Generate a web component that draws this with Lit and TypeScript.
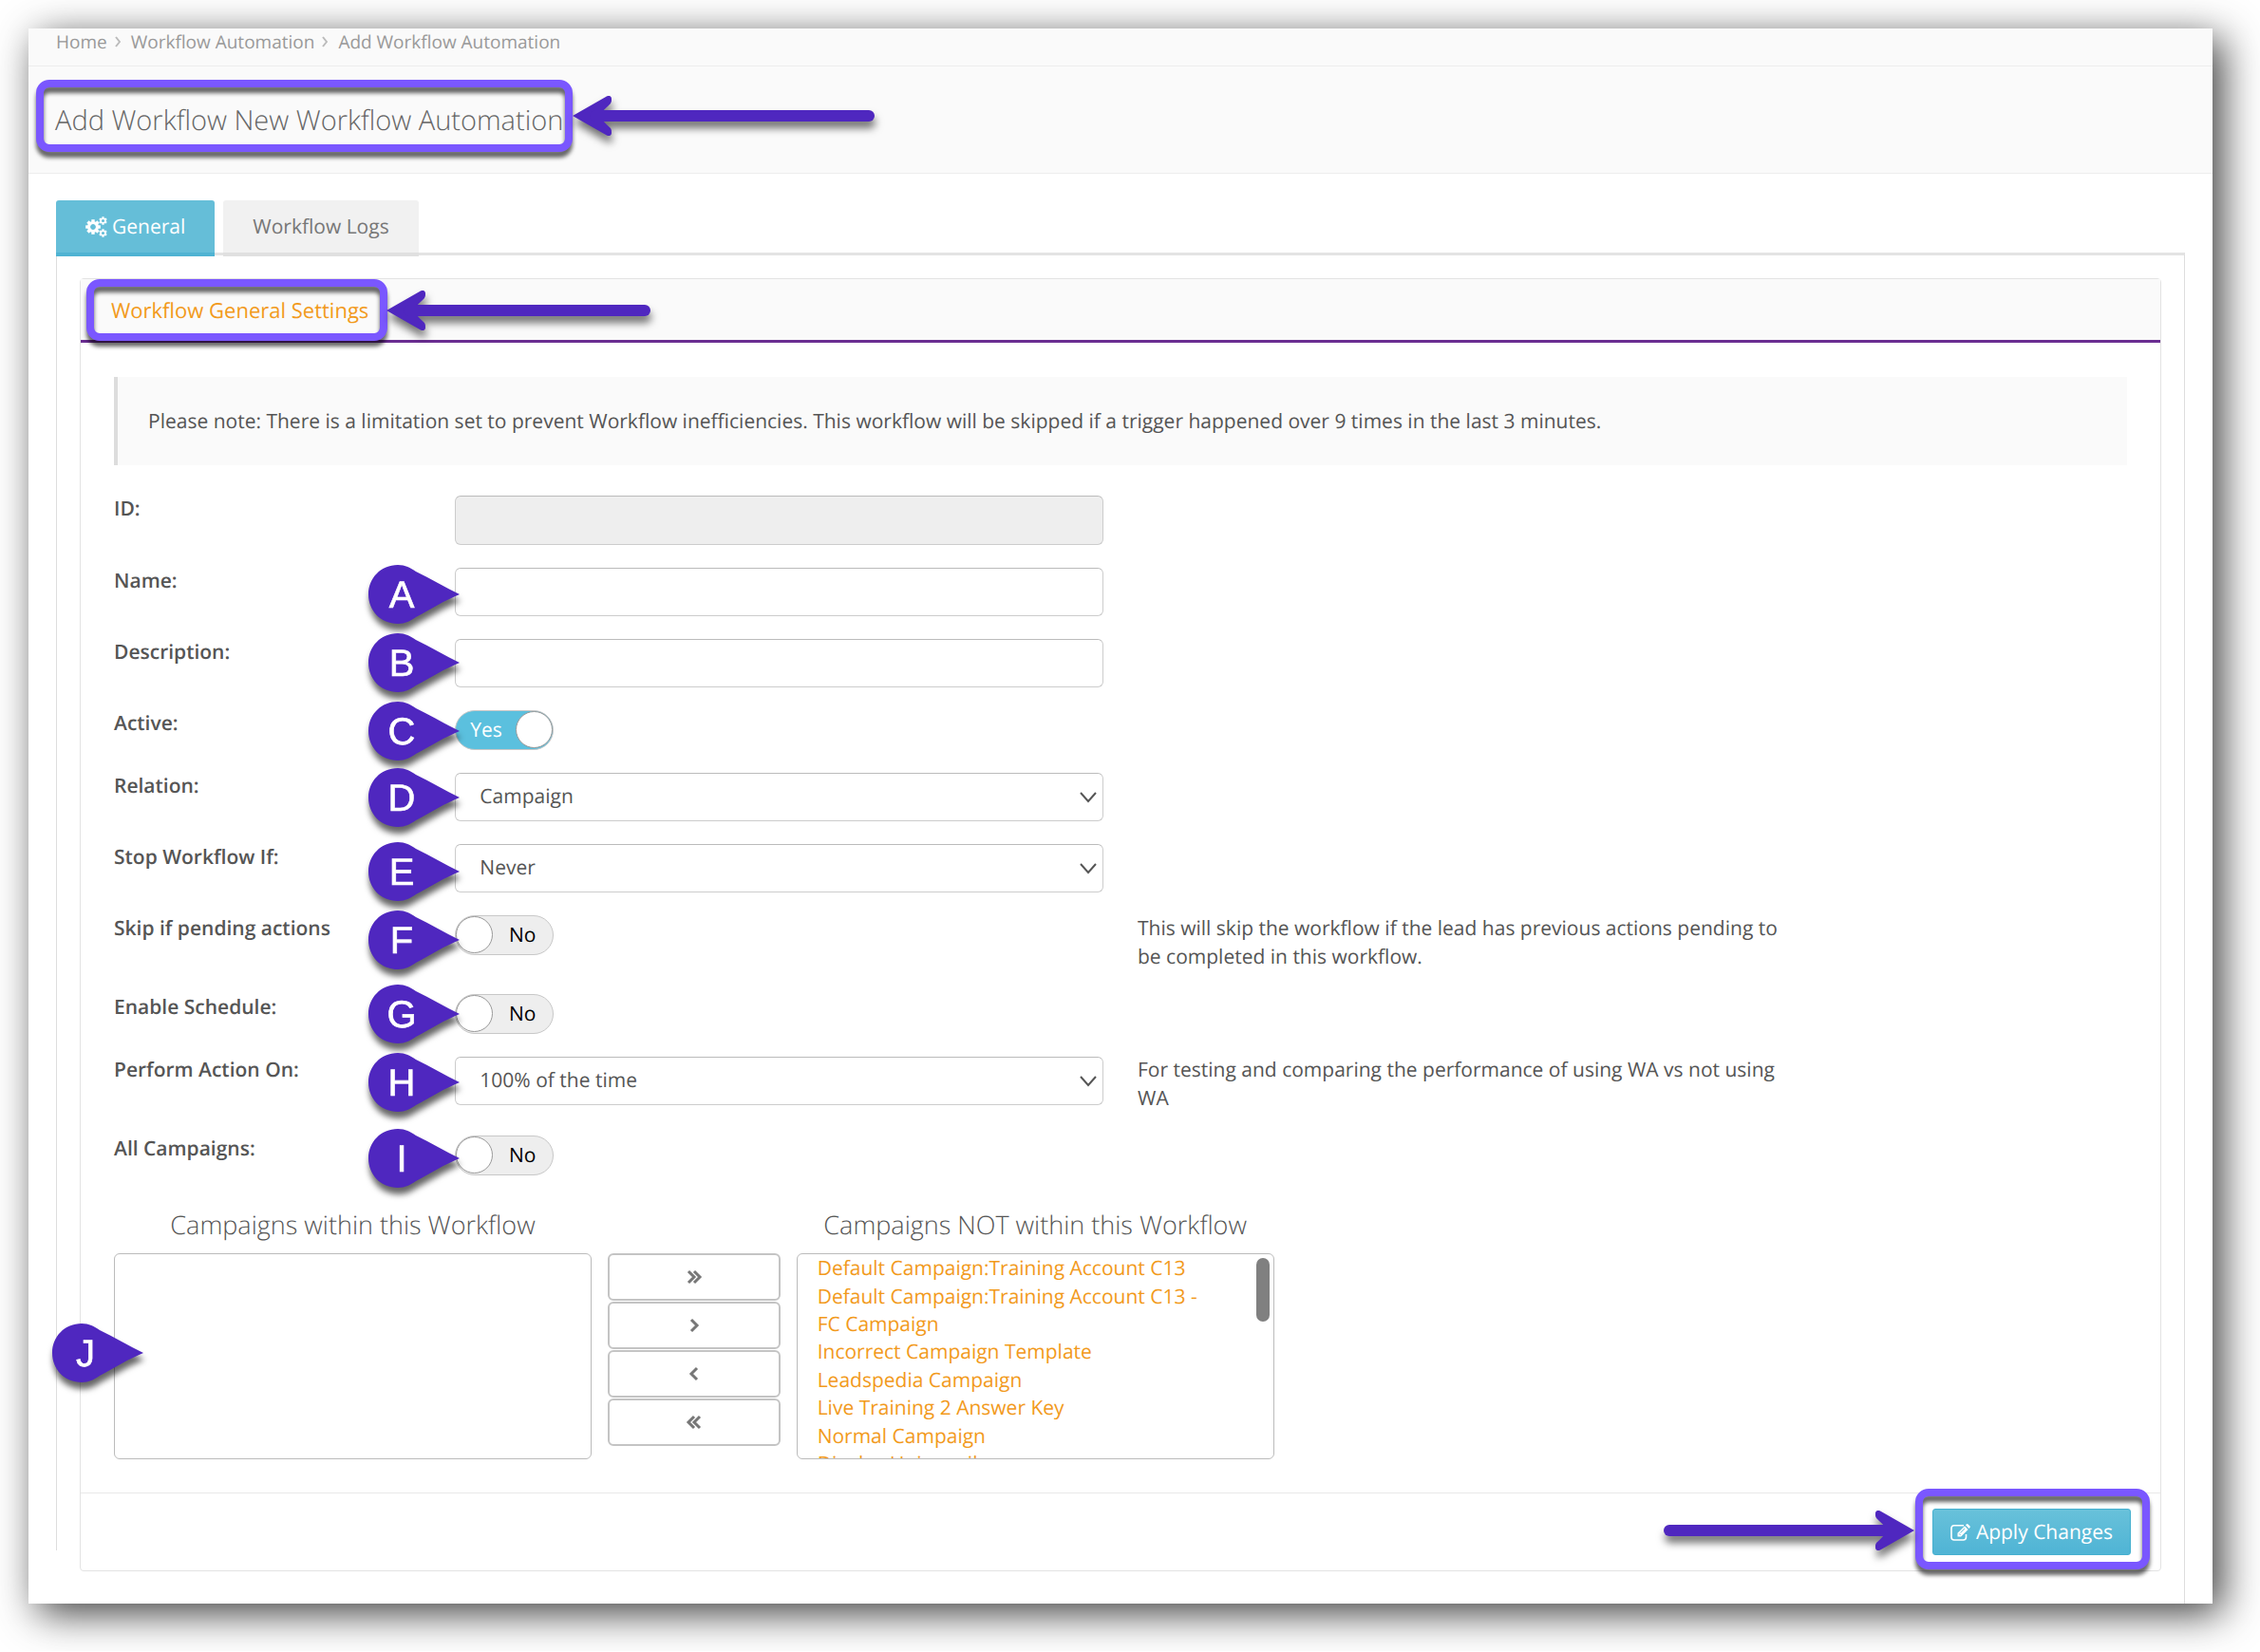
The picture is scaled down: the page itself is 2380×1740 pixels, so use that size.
import { LitElement, html, svg, css, nothing, TemplateResult } from "lit";
import { customElement, property } from "lit/decorators.js";

const fonts = css`"Open Sans", "Noto Sans", sans-serif`;

/** Lettered drop-shaped pin whose tip points right. */
@customElement("callout-pin")
class CalloutPin extends LitElement {
  @property() letter = "";

  static styles = css`
    :host { display: block; width: 96px; height: 62px; pointer-events: none; }
    .pin { display: block; overflow: visible; filter: drop-shadow(1px 7px 3px rgba(0, 0, 0, 0.6)); }
    .shape { fill: #4f27bf; }
    .letter { fill: #fff; font: 40px "Liberation Sans", Arial, sans-serif; text-anchor: middle; }
  `;

  render() {
    return html`<svg class="pin" width="96" height="62" viewBox="0 0 96 62">
      <path class="shape" d="M31 0C13 0 0 14 0 31s13 31 31 31c8 0 13-3 19-7 15-8 31-18 46-24C81 24 65 14 50 7 44 3 39 0 31 0z" />
      <text class="letter" x="35" y="45" stroke="#fff" stroke-width="0.6">${this.letter}</text>
    </svg>`;
  }
}

/** Straight arrow; it spans the width of its host. */
@customElement("callout-arrow")
class CalloutArrow extends LitElement {
  @property() to: "left" | "right" = "left";

  static styles = css`
    :host { display: flex; align-items: center; height: 42px; pointer-events: none; filter: drop-shadow(1px 7px 4px rgba(0, 0, 0, 0.55)); }
    :host([to="right"]) { flex-direction: row-reverse; }
    .head { display: block; flex: none; fill: #4f27bf; }
    :host([to="right"]) .head { transform: scaleX(-1); }
    .shaft { flex: 1; height: 12px; border-radius: 6px; background: #4f27bf; margin: 0 0 0 -24px; }
    :host([to="right"]) .shaft { margin: 0 -24px 0 0; }
  `;

  render() {
    return html`<svg class="head" width="42" height="42" viewBox="0 0 42 42">
        <path d="M0 21L35 1c3-2 6-1 6 2s0 3-1 5C36 12 32 15 28 21c4 6 8 9 12 13 1 2 1 2 1 5s-3 4-6 2z" />
      </svg>
      <span class="shaft"></span>`;
  }
}

type Field = {
  id: string;
  label: string;
  kind: "text" | "readonly" | "select" | "switch";
  value?: string;
  on?: boolean;
  help?: string;
  pin?: string;
  pinTop?: number;
};

const fields: Field[] = [
  { id: "id", label: "ID:", kind: "readonly" },
  { id: "name", label: "Name:", kind: "text", pin: "A", pinTop: -3 },
  { id: "description", label: "Description:", kind: "text", pin: "B", pinTop: -6 },
  { id: "active", label: "Active:", kind: "switch", on: true, pin: "C", pinTop: -9 },
  { id: "relation", label: "Relation:", kind: "select", value: "Campaign", pin: "D", pinTop: -5 },
  { id: "stop", label: "Stop Workflow If:", kind: "select", value: "Never", pin: "E", pinTop: -2 },
  {
    id: "skip", label: "Skip if pending actions", kind: "switch", pin: "F", pinTop: -5,
    help: "This will skip the workflow if the lead has previous actions pending to be completed in this workflow.",
  },
  { id: "schedule", label: "Enable Schedule:", kind: "switch", pin: "G", pinTop: -10 },
  {
    id: "perform", label: "Perform Action On:", kind: "select", value: "100% of the time", pin: "H", pinTop: -4,
    help: "For testing and comparing the performance of using WA vs not using WA",
  },
  { id: "all", label: "All Campaigns:", kind: "switch", pin: "I", pinTop: -7 },
];

const campaigns = [
  "Default Campaign:Training Account C13",
  "Default Campaign:Training Account C13 - FC Campaign",
  "Incorrect Campaign Template",
  "Leadspedia Campaign",
  "Live Training 2 Answer Key",
  "Normal Campaign",
  "Display Uni email",
];

const crumbs = ["Home", "Workflow Automation", "Add Workflow Automation"];

const chevron = (points: string[], flip = false) => html`<svg class="move-icon" width="18" height="16" viewBox="0 0 18 16">
  <g transform=${flip ? "matrix(-1 0 0 1 18 0)" : "matrix(1 0 0 1 0 0)"}>${points.map((p) => svg`<polyline points=${p} />`)}</g>
</svg>`;
const doublePoints = ["3,2 9,8 3,14", "9,2 15,8 9,14"];
const singlePoints = ["6,2 12,8 6,14"];

const moves: { name: string; icon: TemplateResult }[] = [
  { name: "Move all right", icon: chevron(doublePoints) },
  { name: "Move right", icon: chevron(singlePoints) },
  { name: "Move left", icon: chevron(singlePoints, true) },
  { name: "Move all left", icon: chevron(doublePoints, true) },
];

const gear = (cx: number, cy: number, r: number, teeth: number, tooth: number) => svg`
  <g transform=${`translate(${cx} ${cy})`}>
    <circle r=${r * 0.66} fill="none" stroke="#fff" stroke-width=${r * 0.46} />
    ${Array.from({ length: teeth }, (_, i) => svg`<rect x=${-tooth / 2} y=${-r * 1.15} width=${tooth} height=${r * 0.4} transform=${`rotate(${(i * 360) / teeth})`} />`)}
  </g>`;

@customElement("app-root")
class AppRoot extends LitElement {
  static styles = css`
    :host { display: block; box-sizing: border-box; padding: 30px 50px 50px 30px; background: #fff; font: 21px/30px ${fonts}; color: #555; text-rendering: geometricPrecision; }
    *, *::before { box-sizing: border-box; }
    a { text-decoration: none; color: inherit; }
    h1, h2, h3, p, ul { margin: 0; padding: 0; font-weight: 400; }
    button, input, select { font: inherit; color: inherit; margin: 0; text-rendering: inherit; }

    .window { background: #fff; box-shadow: 10px 10px 40px rgba(0, 0, 0, 0.76); }

    .crumbs { display: flex; gap: 8px; align-items: center; height: 40px; padding: 0 29px 12px; background: #fafafa; border-bottom: 1px solid #ededed; font-size: 19px; line-height: 28px; color: #999; }
    .crumb-sep { display: block; margin-right: 3px; fill: none; stroke: #bbb; stroke-width: 2; }

    .title-bar { display: flex; padding: 37px 28px 35px; background: #fafafa; border-bottom: 1px solid #ededed; }
    .title { font-size: 29px; line-height: 40px; font-weight: 300; color: #666; white-space: nowrap; }

    .marked { position: relative; }
    .frame { position: absolute; border: 8px solid #7a57ff; border-radius: 14px; pointer-events: none; filter: drop-shadow(0 6px 2px rgba(0, 0, 0, 0.6)); }
    .arrow { position: absolute; }
    .title-frame { inset: -23px -10px -13px -20px; }
    .title-arrow { left: calc(100% + 10px); top: -6px; width: 318px; }
    .heading-frame { inset: -18px -20px -17px -26px; }
    .heading-arrow { left: calc(100% + 19px); top: -6px; width: 278px; }
    .apply-frame { inset: -21px -20px -15px -18px; }
    .apply-arrow { right: calc(100% + 19px); top: 2px; width: 264px; }

    .body { padding: 28px 29px 0; }
    .tabs { display: flex; gap: 9px; }
    .tab { display: flex; align-items: center; gap: 5px; height: 59px; margin-bottom: -4px; padding: 0 31px; border: 0; border-bottom: 4px solid #e0e0e0; border-radius: 3px 3px 0 0; background: #f1f1f1; color: #777; z-index: 1; }
    .tab.current { background: #65bed8; border-bottom-color: #4fb3d3; color: #fff; }
    .tab-icon { display: block; fill: #fff; }

    .tab-page { border-top: 3px solid #e3e3e3; border-right: 1px solid #ddd; padding: 24px 24px 34px 25px; background: linear-gradient(#ddd, #ddd) left top / 1px calc(100% - 56px) no-repeat; }
    .panel { border: 1px solid #e3e3e3; border-radius: 4px; }
    .panel-head { display: flex; padding: 18px 32px 16px; background: #fafafa; border-bottom: 3px solid #6a2d91; }
    .panel-title { font-size: 22px; line-height: 30px; color: #f29a1c; white-space: nowrap; }
    .panel-body { padding: 36px 35px 35px; }
    .note { padding: 32px 32px 31px; border-left: 4px solid #ddd; background: #fafafa; margin-bottom: 32px; }

    .fields { display: grid; gap: 24px; }
    .row { display: grid; grid-template-columns: repeat(12, 1fr); column-gap: 36px; align-items: start; }
    .label { grid-column: span 2; line-height: 28px; font-weight: 600; white-space: nowrap; }
    .control { grid-column: span 4; display: grid; position: relative; justify-items: start; }
    .help { grid-column: span 4; line-height: 30px; margin-top: -1px; }
    .pin { position: absolute; left: -91px; z-index: 1; }

    .box { grid-area: 1 / 1; width: 100%; height: 51px; padding: 0 25px 2px; border: 1px solid #ccc; border-top-color: #bbb; border-radius: 6px; background: #fff; appearance: none; }
    .box.locked { height: 52px; background: #eee; }
    .box-arrow { grid-area: 1 / 1; justify-self: end; align-self: center; margin-right: 7px; fill: none; stroke: #555; stroke-width: 2; pointer-events: none; }

    .switch { display: grid; align-items: center; width: 104px; height: 42px; }
    .switch-input { grid-area: 1 / 1; appearance: none; display: flex; width: 104px; height: 42px; border: 1px solid #c8c8c8; border-radius: 21px; background: #eee; }
    .switch-input::before { content: ""; width: 39px; height: 39px; border: 1px solid #999; border-radius: 50%; background: #fff; }
    .switch-input:checked { justify-content: flex-end; background: #5bc0de; }
    .switch-text { grid-area: 1 / 1; justify-self: end; padding-right: 19px; color: #000; pointer-events: none; }
    .switch-input:checked + .switch-text { justify-self: start; padding-left: 16px; color: #fff; }

    .transfer { display: grid; grid-template-columns: repeat(12, 1fr); column-gap: 36px; margin-top: 32px; position: relative; }
    .list-title { font-size: 27px; line-height: 40px; font-weight: 300; text-align: center; white-space: nowrap; margin-bottom: 10px; }
    .side { grid-column: span 3; position: relative; }
    .list { height: 217px; overflow: hidden; list-style: none; border: 1px solid #bbb; border-radius: 6px; padding: 1px 64px 0 21px; color: #f29a1c; line-height: 29px; }
    .item:nth-child(odd) { margin-bottom: 1px; }
    .thumb { position: absolute; right: 5px; top: 55px; width: 14px; height: 67px; border-radius: 7px; background: #808080; }
    .moves { grid-column: span 1; display: grid; gap: 1px; align-content: start; margin: 50px -19px 0; }
    .move { display: grid; place-items: center; height: 50px; padding: 0; border: 2px solid #c4c4c4; border-radius: 6px; background: #fff; }
    .move-icon { display: block; fill: none; stroke: #777; stroke-width: 3; }
    .list-pin { position: absolute; left: -65px; top: 124px; }

    .panel-foot { display: flex; justify-content: flex-end; padding: 16px 31px; border-top: 1px solid #e8e8e8; }
    .apply { display: flex; align-items: center; gap: 6px; height: 49px; padding: 0 18px; border: 1px solid #46b0cf; border-radius: 3px; background: linear-gradient(#68c1da, #4fb4d5); color: #fff; white-space: nowrap; }
    .apply-icon { display: block; fill: #fff; }
  `;

  private control(f: Field) {
    if (f.kind === "switch") {
      return html`<span class="switch">
        <input class="switch-input" type="checkbox" id=${f.id} ?checked=${!!f.on} />
        <span class="switch-text">${f.on ? "Yes" : "No"}</span>
      </span>`;
    }
    if (f.kind === "select") {
      return html`<select class="box" id=${f.id}><option>${f.value}</option></select>
        <svg class="box-arrow" width="18" height="12" viewBox="0 0 18 12"><polyline points="1,1 9,10 17,1" /></svg>`;
    }
    return f.kind === "readonly"
      ? html`<input class="box locked" id=${f.id} type="text" readonly />`
      : html`<input class="box" id=${f.id} type="text" />`;
  }

  private row(f: Field) {
    return html`<div class="row">
      <label class="label" for=${f.id}>${f.label}</label>
      <div class="control">
        ${this.control(f)}
        ${f.pin ? html`<callout-pin class="pin" style=${`top:${f.pinTop}px`} letter=${f.pin}></callout-pin>` : nothing}
      </div>
      ${f.help ? html`<p class="help">${f.help}</p>` : nothing}
    </div>`;
  }

  render() {
    return html`<main class="window">
      <nav class="crumbs" aria-label="Breadcrumb">
        ${crumbs.map((c, i) => html`
          ${i ? html`<svg class="crumb-sep" width="6" height="12" viewBox="0 0 6 12"><polyline points="1,1 5,6 1,11" /></svg>` : nothing}
          <a href="#">${c}</a>`)}
      </nav>
      <header class="title-bar">
        <div class="marked">
          <h1 class="title">Add Workflow New Workflow Automation</h1>
          <span class="frame title-frame"></span>
          <callout-arrow class="arrow title-arrow" to="left"></callout-arrow>
        </div>
      </header>
      <div class="body">
        <div class="tabs" role="tablist">
          <button class="tab current" role="tab" aria-selected="true">
            <svg class="tab-icon" width="23" height="22" viewBox="0 0 23 22">
              ${gear(8, 11, 6.8, 8, 3.4)}${gear(18.5, 4.5, 3.7, 6, 2.2)}${gear(18.5, 17.5, 3.7, 6, 2.2)}
            </svg>
            General
          </button>
          <button class="tab" role="tab" aria-selected="false">Workflow Logs</button>
        </div>
        <section class="tab-page">
          <form class="panel" @submit=${(e: Event) => e.preventDefault()}>
            <div class="panel-head">
              <div class="marked">
                <h2 class="panel-title">Workflow General Settings</h2>
                <span class="frame heading-frame"></span>
                <callout-arrow class="arrow heading-arrow" to="left"></callout-arrow>
              </div>
            </div>
            <div class="panel-body">
              <p class="note">Please note: There is a limitation set to prevent Workflow inefficiencies. This workflow will be skipped if a trigger happened over 9 times in the last 3 minutes.</p>
              <div class="fields">${fields.map((f) => this.row(f))}</div>
              <div class="transfer">
                <div class="side">
                  <h3 class="list-title">Campaigns within this Workflow</h3>
                  <ul class="list"></ul>
                  <callout-pin class="list-pin" letter="J"></callout-pin>
                </div>
                <div class="moves">
                  ${moves.map((m) => html`<button class="move" type="button" aria-label=${m.name}>${m.icon}</button>`)}
                </div>
                <div class="side">
                  <h3 class="list-title">Campaigns NOT within this Workflow</h3>
                  <ul class="list">${campaigns.map((c) => html`<li class="item"><a href="#">${c}</a></li>`)}</ul>
                  <span class="thumb"></span>
                </div>
              </div>
            </div>
            <div class="panel-foot">
              <div class="marked">
                <button class="apply" type="submit">
                  <svg class="apply-icon" width="21" height="18" viewBox="0 0 21 18">
                    <path d="M14 1.800H4a3 3 0 0 0-3 3V14a3 3 0 0 0 3 3h9.500a3 3 0 0 0 3-3v-3" fill="none" stroke="#fff" stroke-width="1.600" />
                    <path d="M7.500 9.800L15 2.300l3.600 3.600-7.500 7.500H7.500z" />
                    <path d="M16 1.300l.8-.8q.9-.8 1.800 0l1.800 1.800q.8.900 0 1.800l-.8.800z" />
                    <path d="M10.500 9.500L15 5M9 10.300l1.700 1.700" fill="none" stroke="#5cbad7" stroke-width="0.900" />
                  </svg>
                  Apply Changes
                </button>
                <span class="frame apply-frame"></span>
                <callout-arrow class="arrow apply-arrow" to="right"></callout-arrow>
              </div>
            </div>
          </form>
        </section>
      </div>
    </main>`;
  }
}
